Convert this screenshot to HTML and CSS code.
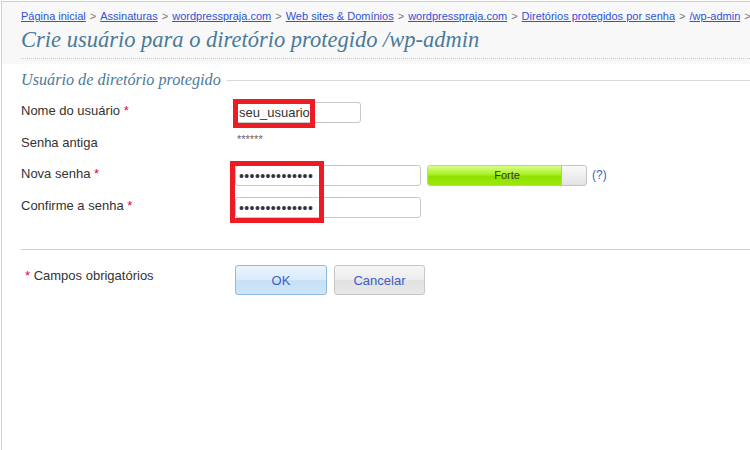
FILE: index.html
```html
<!DOCTYPE html>
<html lang="pt">
<head>
<meta charset="utf-8">
<title>Crie usuário</title>
<link rel="stylesheet" href="styles.css">
</head>
<body>
<div class="page">
  <div class="header">
    <div class="header-inner">
      <div class="crumbs">
        <a href="#">Página inicial</a><span class="sep">&gt;</span><a href="#">Assinaturas</a><span class="sep">&gt;</span><a href="#">wordpresspraja.com</a><span class="sep">&gt;</span><a href="#">Web sites &amp; Domínios</a><span class="sep">&gt;</span><a href="#">wordpresspraja.com</a><span class="sep">&gt;</span><a href="#">Diretórios protegidos por senha</a><span class="sep">&gt;</span><a href="#">/wp-admin</a><span class="sep">&gt;</span>
      </div>
      <h1 class="title">Crie usuário para o diretório protegido /wp-admin</h1>
    </div>
  </div>

  <div class="fieldset">
    <div class="legend"><span class="legend-text">Usuário de diretório protegido</span><span class="legend-line"></span></div>

    <div class="row row-user">
      <label class="label">Nome do usuário <span class="req">*</span></label>
      <input class="field field-short" type="text" value="seu_usuario">
    </div>
    <div class="row row-old">
      <span class="label">Senha antiga</span>
      <span class="old-pass">******</span>
    </div>
    <div class="row">
      <label class="label">Nova senha <span class="req">*</span></label>
      <input class="field field-long pass" type="password" value="abcdefghijklmn">
      <div class="meter"><div class="meter-fill" style="width:85%"></div><span class="meter-text">Forte</span></div>
      <a class="help" href="#">(?)</a>
    </div>
    <div class="row">
      <label class="label">Confirme a senha <span class="req">*</span></label>
      <input class="field field-long pass" type="password" value="abcdefghijklmn">
    </div>
  </div>

  <div class="footer">
    <div class="required-note"><span class="req">*</span> Campos obrigatórios</div>
    <div class="buttons">
      <button class="btn btn-ok" type="button">OK</button>
      <button class="btn btn-cancel" type="button">Cancelar</button>
    </div>
  </div>
</div>

<div class="mark mark-user"></div>
<div class="mark mark-pass"></div>
</body>
</html>
```

FILE: styles.css
```css
* { box-sizing: border-box; }
html, body { margin: 0; padding: 0; background: #fff; }
body {
  width: 750px;
  height: 450px;
  overflow: hidden;
  font-family: "Liberation Sans", Arial, sans-serif;
  color: #333;
}
.page {
  margin: 1px 0 0 1px;
  border-top: 1px solid #cfcfcf;
  border-left: 1px solid #cfcfcf;
  height: 449px;
}
.header {
  background: #f8f8f8;
  padding: 7px 0 5px 19px;
}
.header-inner {
  border-bottom: 1px dotted #c8c8c8;
  padding-bottom: 5px;
}
.crumbs {
  font-size: 11px;
  line-height: 14px;
  white-space: nowrap;
}
.crumbs a { color: #3152d6; text-decoration: underline; }
.crumbs .sep { color: #777; margin: 0 4px; }
.title {
  margin: 4px 0 0 0;
  font-family: "Liberation Serif", "Times New Roman", serif;
  font-style: italic;
  font-weight: normal;
  font-size: 22.5px;
  line-height: 26px;
  color: #4b7a98;
}
.fieldset { padding-left: 19px; }
.legend {
  display: flex;
  align-items: center;
  margin-top: 6px;
  height: 20px;
}
.legend-text {
  font-family: "Liberation Serif", "Times New Roman", serif;
  font-style: italic;
  font-size: 16.2px;
  line-height: 20px;
  color: #4b7a98;
  padding-right: 6px;
}
.legend-line { flex: 1; border-top: 1px solid #d8d8d8; margin-top: 1px; }
.row {
  display: flex;
  align-items: flex-start;
  margin-bottom: 11px;
}
.row-user { margin-top: 12px; }
.row-user .label { padding-top: 1px; }
.row-old { height: 20px; }
.label {
  width: 214px;
  font-size: 13px;
  line-height: 16px;
  color: #333;
  padding-top: 1px;
}
.req { color: #d0103a; }
.old-pass {
  font-size: 11px;
  line-height: 10px;
  color: #666;
  padding-left: 2px;
}
.field {
  height: 21px;
  border: 1px solid #c8c8c8;
  border-radius: 3px;
  background: #fff;
  font-family: "Liberation Sans", Arial, sans-serif;
  font-size: 13px;
  color: #333;
  padding: 0 3px;
  margin: 0;
  outline: none;
}
.field-short { width: 126px; }
.field-long { width: 186px; }
.pass { font-size: 14px; letter-spacing: 0.4px; padding-left: 3px; color: #334; }
.meter {
  position: relative;
  width: 160px;
  height: 21px;
  margin-left: 6px;
  border: 1px solid #c4c4c4;
  border-radius: 3px;
  background: linear-gradient(#fafafa, #e2e2e2);
  overflow: hidden;
}
.meter-fill {
  height: 100%;
  background: linear-gradient(#d8ff8a 0%, #a8f020 45%, #8fe000 55%, #9ae80a 100%);
  border-right: 1px solid #b0c890;
}
.meter-text {
  position: absolute;
  left: 0; right: 0; top: 0;
  text-align: center;
  font-size: 11px;
  line-height: 19px;
  color: #333;
}
.help {
  margin-left: 5px;
  font-size: 12px;
  line-height: 20px;
  color: #3a66b8;
  text-decoration: none;
}
.footer {
  margin: 31px 0 0 19px;
  border-top: 1px solid #cfcfcf;
  padding-top: 15px;
  display: flex;
  align-items: flex-start;
}
.required-note {
  width: 214px;
  padding: 3px 0 0 4px;
  font-size: 13px;
  line-height: 16px;
  color: #333;
}
.buttons { display: flex; gap: 7px; }
.btn {
  height: 30px;
  border-radius: 3px;
  font-family: "Liberation Sans", Arial, sans-serif;
  font-size: 13px;
  color: #3a5fc8;
  margin: 0;
  padding: 0;
}
.btn-ok {
  width: 92px;
  border: 1px solid #8cbbe2;
  background: linear-gradient(#eaf4fd 0%, #d9ebfa 50%, #c6e0f6 52%, #cfe5f8 100%);
}
.btn-cancel {
  width: 91px;
  border: 1px solid #c6c6c6;
  background: linear-gradient(#f6f6f6 0%, #ececec 50%, #e2e2e2 52%, #e8e8e8 100%);
}
.mark {
  position: absolute;
  border: 5px solid #ed1c24;
}
.mark-user { left: 233px; top: 99px; width: 82px; height: 29px; }
.mark-pass { left: 230px; top: 161px; width: 94px; height: 62px; }
```
